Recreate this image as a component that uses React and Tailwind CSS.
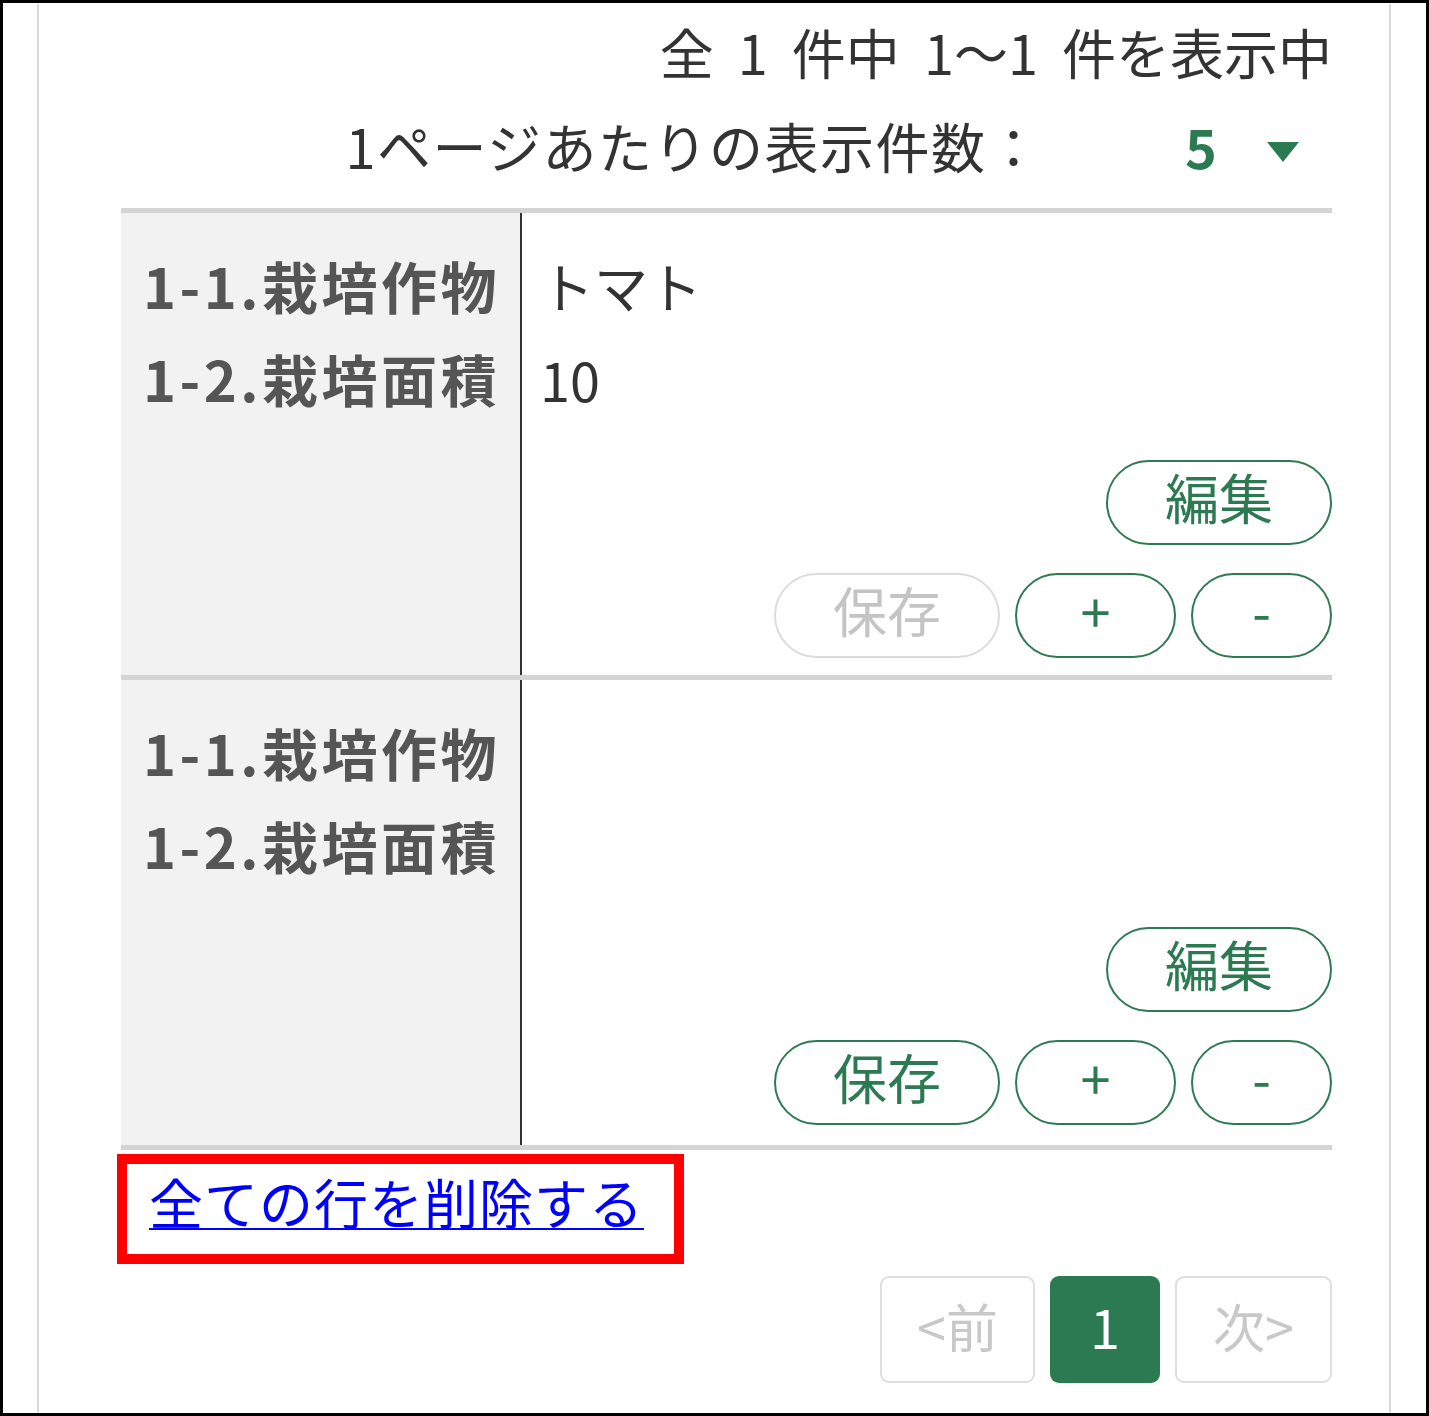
const green = 'text-[#2b7a51]';

const PillButton = ({ label, width, disabled }) => (
  <button
    type="button"
    disabled={disabled}
    className={`h-[85px] rounded-full border-2 bg-white text-[54px] leading-none flex items-center justify-center pb-[12px] ${width} ${
      disabled ? 'border-[#dcdcdc] text-[#c4c4c4]' : `border-[#2e7a52] ${green}`
    }`}
  >
    {label}
  </button>
);

const Row = ({ crop, area, saveDisabled, bottomPad }) => (
  <div className="flex border-t-[5px] border-[#d4d4d4]">
    <div className="w-[401px] shrink-0 bg-[#f2f2f2] border-r-2 border-[#333] pl-[22px] pt-[25px]">
      <div className="h-[93px] leading-[93px] font-bold text-[#555] text-[56px] tracking-[3.5px]">1-1.栽培作物</div>
      <div className="h-[93px] leading-[93px] font-bold text-[#555] text-[56px] tracking-[3.5px]">1-2.栽培面積</div>
    </div>
    <div className={`flex-1 flex flex-col pt-[26px] pl-[18px] ${bottomPad}`}>
      <div className="h-[93px] leading-[93px] text-[54px] text-[#333]">{crop}</div>
      <div className="h-[93px] leading-[93px] text-[54px] text-[#333]">{area}</div>
      <div className="mt-[35px] flex justify-end">
        <PillButton label="編集" width="w-[226px]" />
      </div>
      <div className="mt-[28px] flex justify-end gap-[15px]">
        <PillButton label="保存" width="w-[226px]" disabled={saveDisabled} />
        <PillButton label="+" width="w-[161px]" />
        <PillButton label="-" width="w-[141px]" />
      </div>
    </div>
  </div>
);

export default function App() {
  return (
    <div
      className="w-[1429px] h-[1416px] border-[3px] border-black bg-white overflow-hidden"
      style={{ fontFamily: '"Noto Sans CJK JP", "Noto Sans", sans-serif' }}
    >
      <div className="ml-[34px] w-[1354px] h-full border-x-2 border-[#d9d9d9] pl-[82px] pr-[57px]">
        <div className="mt-[1px] h-[95px] leading-[95px] text-right text-[54px] text-[#333] [word-spacing:12px]">
          全 1 件中 1～1 件を表示中
        </div>
        <div className="h-[95px] flex items-center justify-end text-[54px] text-[#333] pb-[3px]">
          <span className="tracking-[1.5px]">1ページあたりの表示件数：</span>
          <div className="w-[290px] flex items-center pl-[143px]">
            <span className={`font-bold ${green} text-[54px]`}>5</span>
            <svg width="32" height="20" viewBox="0 0 32 20" className="ml-[50px] mt-[14px]">
              <polygon points="0,0 32,0 16,20" fill="#2b7a51" />
            </svg>
          </div>
        </div>
        <div className="mt-[14px]">
          <Row crop="トマト" area="10" saveDisabled bottomPad="pb-[17px]" />
          <Row crop="" area="" bottomPad="pb-[20px]" />
          <div className="border-t-[5px] border-[#d4d4d4]" />
        </div>
        <div className="-ml-[4px] mt-[4px] w-[567px] h-[110px] border-[10px] border-[#ff0000] flex items-center pl-[22px] pb-[14px]">
          <a href="#" className="text-[54px] text-[#0000ff] underline underline-offset-[3px] decoration-2 leading-none tracking-[1px]">
            全ての行を削除する
          </a>
        </div>
        <div className="mt-[12px] flex justify-end gap-[15px]">
          <div className="w-[155px] h-[107px] rounded-[9px] border-2 border-[#dedede] flex items-center justify-center pb-[8px] text-[52px] text-[#c8c8c8]">
            &lt;前
          </div>
          <div className="w-[110px] h-[107px] rounded-[9px] bg-[#2b7a51] flex items-center justify-center pb-[8px] text-[54px] text-white">
            1
          </div>
          <div className="w-[157px] h-[107px] rounded-[9px] border-2 border-[#dedede] flex items-center justify-center pb-[8px] text-[52px] text-[#c8c8c8]">
            次&gt;
          </div>
        </div>
      </div>
    </div>
  );
}
